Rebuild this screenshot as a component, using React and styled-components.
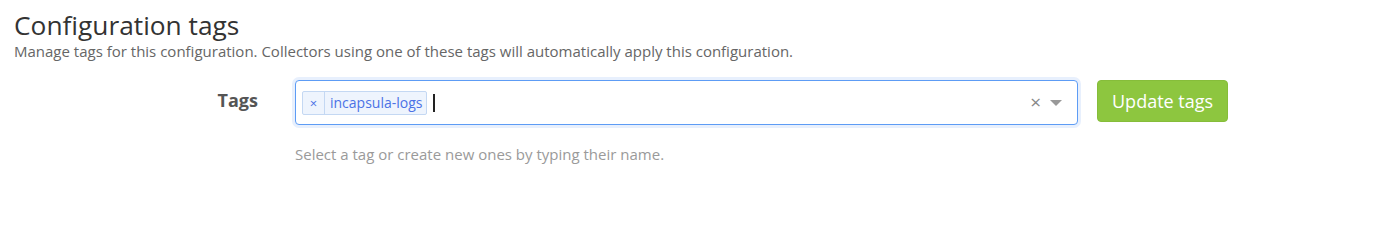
import React from "react";
import styled, { createGlobalStyle } from "styled-components";

const GlobalStyle = createGlobalStyle`
  body {
    margin: 0;
    background: #fff;
    font-family: "Open Sans", "Liberation Sans", sans-serif;
  }
`;

const Page = styled.div`
  padding: 8px 14px 0;
`;

const Title = styled.h2`
  margin: 0;
  font-size: 26.3px;
  font-weight: 400;
  line-height: 34px;
  color: #333;
`;

const Lead = styled.p`
  margin: 0;
  font-size: 15px;
  line-height: 18px;
  color: #666;
`;

const FormRow = styled.div`
  display: grid;
  grid-template-columns: 244px 783px auto;
  column-gap: 37px;
  margin-top: 20px;
  align-items: start;
`;

const Label = styled.label`
  grid-row: 1;
  text-align: right;
  font-size: 18px;
  font-weight: 700;
  color: #555;
  line-height: 41px;
`;

const Select = styled.div`
  grid-row: 1;
  display: flex;
  align-items: center;
  box-sizing: border-box;
  height: 45px;
  padding: 0 8px 0 6px;
  border: 1px solid #5d9cf5;
  border-radius: 4px;
  box-shadow: 0 0 0 3px #e8f0fd;
  background: #fff;
`;

const Chip = styled.div`
  display: flex;
  align-items: stretch;
  height: 24px;
  box-sizing: border-box;
  border: 1px solid #c4d8f3;
  border-radius: 2px;
  background: #eef4fd;
  color: #4b72e6;
  font-size: 14px;
`;

const ChipRemove = styled.span`
  display: flex;
  align-items: center;
  justify-content: center;
  width: 21px;
  border-right: 1px solid #c4d8f3;
  font-size: 13px;
`;

const ChipText = styled.span`
  display: flex;
  align-items: center;
  padding: 0 4px 0 5px;
`;

const Caret = styled.span`
  width: 2px;
  height: 18px;
  margin-left: 6px;
  background: #222;
`;

const Spacer = styled.div`
  flex: 1;
`;

const Clear = styled.span`
  color: #888;
  font-size: 19px;
  line-height: 1;
  margin-right: 9px;
`;

const Arrow = styled.span`
  width: 0;
  height: 0;
  border-left: 6px solid transparent;
  border-right: 6px solid transparent;
  border-top: 6px solid #999;
  margin-right: 7px;
`;

const Button = styled.button`
  grid-row: 1;
  justify-self: start;
  margin-left: -18px;
  height: 42px;
  padding: 0 14px;
  border: 1px solid #86bd3a;
  border-radius: 4px;
  background: #8dc63f;
  color: #fff;
  font-family: inherit;
  font-size: 18px;
`;

const Help = styled.div`
  grid-column: 2;
  grid-row: 2;
  margin-top: 19px;
  font-size: 15px;
  color: #9a9a9a;
`;

export default function App() {
  return (
    <>
      <GlobalStyle />
      <Page>
        <Title>Configuration tags</Title>
        <Lead>
          Manage tags for this configuration. Collectors using one of these
          tags will automatically apply this configuration.
        </Lead>
        <FormRow>
          <Label>Tags</Label>
          <Select>
            <Chip>
              <ChipRemove>×</ChipRemove>
              <ChipText>incapsula-logs</ChipText>
            </Chip>
            <Caret />
            <Spacer />
            <Clear>×</Clear>
            <Arrow />
          </Select>
          <Button>Update tags</Button>
          <Help>Select a tag or create new ones by typing their name.</Help>
        </FormRow>
      </Page>
    </>
  );
}
